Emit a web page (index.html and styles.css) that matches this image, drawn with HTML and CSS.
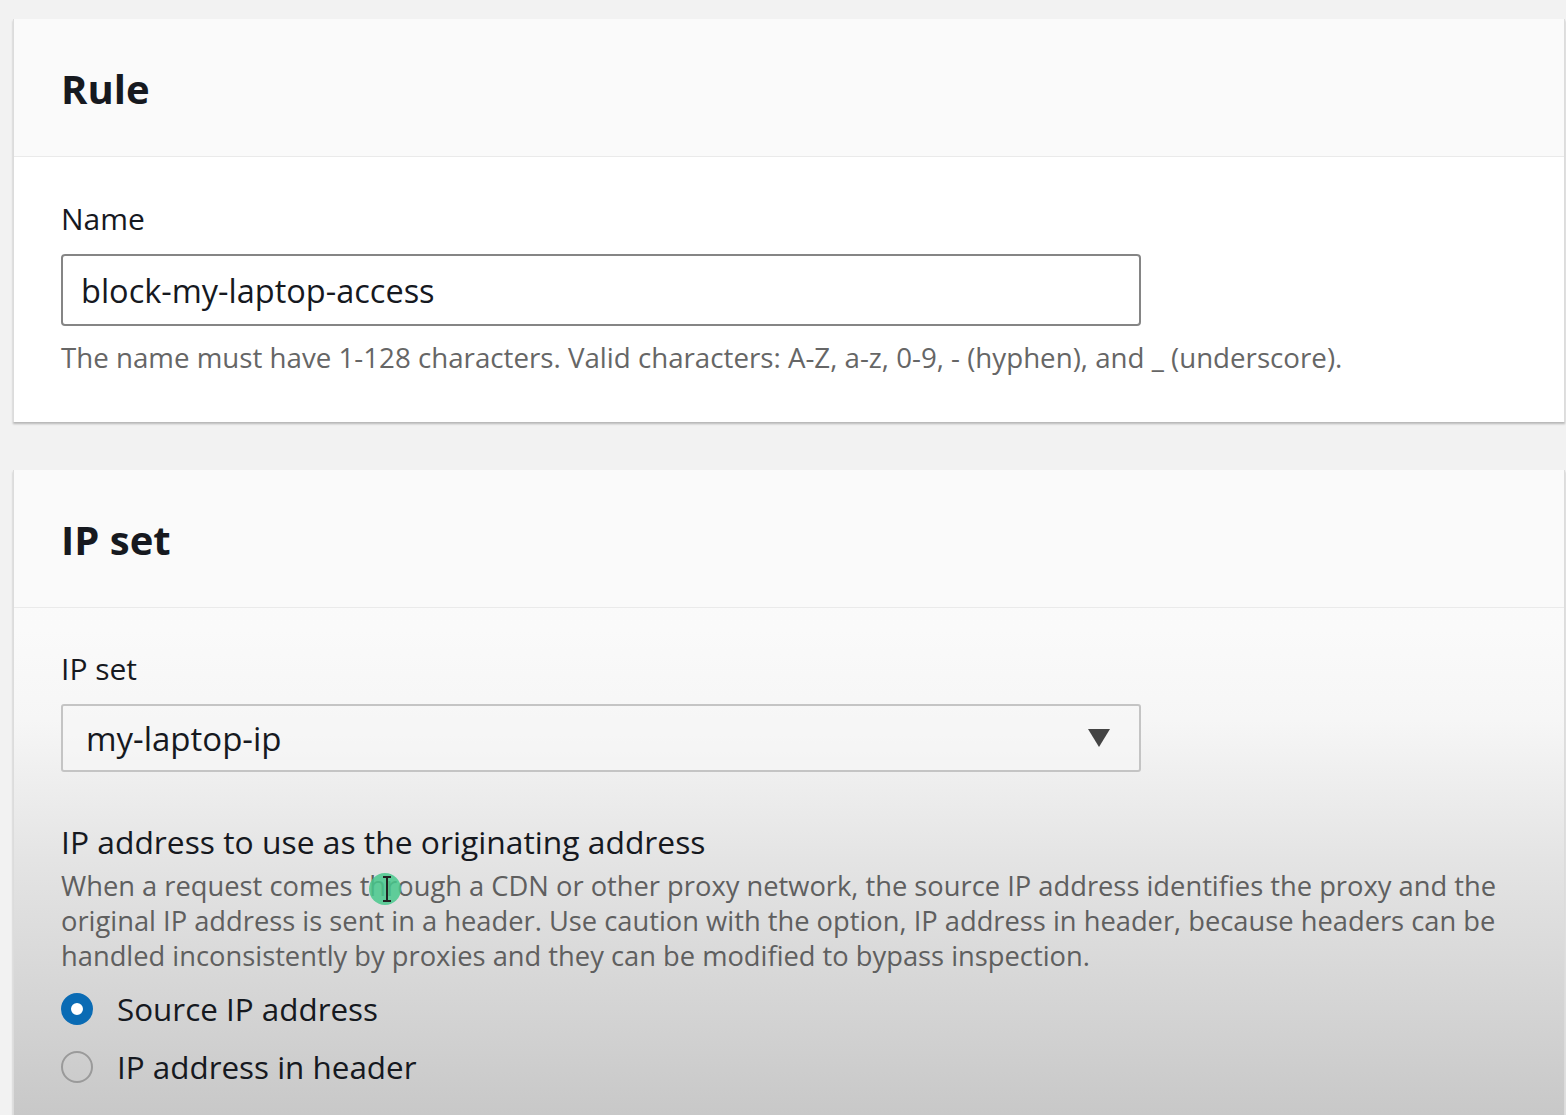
FILE: index.html
```html
<!DOCTYPE html>
<html lang="en">
<head>
<meta charset="utf-8">
<title>Rule</title>
<link rel="stylesheet" href="styles.css">
</head>
<body>
<div class="page">
  <section class="card">
    <header class="card-header"><h2>Rule</h2></header>
    <div class="card-body body-rule">
      <label class="field-label">Name</label>
      <div class="input">block-my-laptop-access</div>
      <p class="hint">The name must have 1-128 characters. Valid characters: A-Z, a-z, 0-9, - (hyphen), and _ (underscore).</p>
    </div>
  </section>

  <section class="card card-ipset">
    <header class="card-header"><h2>IP set</h2></header>
    <div class="card-body body-ipset">
      <label class="field-label label-ipset">IP set</label>
      <div class="select">
        <span>my-laptop-ip</span>
        <svg class="caret" width="24" height="20" viewBox="0 0 24 20"><path d="M1 1 L23 1 L12 19 Z" fill="#444"/></svg>
      </div>
      <div class="group-label">IP address to use as the originating address</div>
      <p class="desc">When a request comes through a CDN or other proxy network, the source IP address identifies the proxy and the original IP address is sent in a header. Use caution with the option, IP address in header, because headers can be handled inconsistently by proxies and they can be modified to bypass inspection.</p>
      <div class="radios">
        <div class="radio-row"><span class="radio checked"></span><span class="radio-text">Source IP address</span></div>
        <div class="radio-row"><span class="radio"></span><span class="radio-text">IP address in header</span></div>
      </div>
      <span class="cursor"><svg class="ibeam" width="12" height="26" viewBox="0 0 12 26"><path d="M2 1 H10 M6 1 V25 M2 25 H10" stroke="#222" stroke-width="2" fill="none"/></svg></span>
    </div>
  </section>
</div>
</body>
</html>
```

FILE: styles.css
```css
html, body {
  margin: 0;
  padding: 0;
  background: #f2f2f2;
  font-family: "Open Sans", "Noto Sans", sans-serif;
  color: #16191f;
}
.page {
  padding: 19px 1px 0 13px;
  height: 1096px;
  overflow: hidden;
  display: flex;
  flex-direction: column;
  gap: 48px;
}
.card {
  background: #ffffff;
  border-left: 1px solid #dcdcdc;
  border-right: 1px solid #dcdcdc;
  box-shadow: 0 2px 2px rgba(0,0,0,0.25);
}
.card-header {
  background: #fafafa;
  border-bottom: 1px solid #eaeaea;
  height: 137px;
  box-sizing: content-box;
  padding: 0 0 0 47px;
  display: flex;
  align-items: flex-start;
}
.card-header h2 {
  margin: 0;
  padding-top: 46px;
  font-size: 40px;
  line-height: 48px;
  font-weight: 700;
  color: #16191f;
}
.card-body {
  padding: 0 0 0 47px;
}
.body-rule {
  height: 265px;
  padding-top: 44px;
  box-sizing: border-box;
}
.field-label {
  display: block;
  font-size: 30px;
  line-height: 36px;
  color: #16191f;
}
.input {
  margin-top: 17px;
  width: 1080px;
  height: 72px;
  box-sizing: border-box;
  border: 2px solid #858585;
  border-radius: 4px;
  padding: 0 18px;
  display: flex;
  align-items: center;
  font-size: 32.5px;
  color: #16191f;
}
.hint {
  margin: 13px 0 0;
  font-size: 27.7px;
  line-height: 36px;
  color: #666666;
}
.card-ipset {
  flex: 1;
  background: linear-gradient(to bottom, #fbfbfb 0, #fafafa 160px, #f6f6f6 250px, #e4e4e4 390px, #d6d6d6 520px, #c8c8c8 645px);
}
.body-ipset {
  position: relative;
  padding-top: 43px;
}
.select {
  margin-top: 17px;
  width: 1080px;
  height: 68px;
  box-sizing: border-box;
  border: 2px solid #c4c4c4;
  border-radius: 3px;
  background: rgba(246,246,246,0.6);
  padding: 0 28px 0 23px;
  display: flex;
  align-items: center;
  justify-content: space-between;
  font-size: 33px;
  color: #16191f;
}
.group-label {
  margin-top: 51px;
  font-size: 31.8px;
  line-height: 38px;
  color: #16191f;
}
.desc {
  margin: 7px 0 0;
  font-size: 27.3px;
  line-height: 35px;
  color: #5f5f5f;
  max-width: 1470px;
}
.radios {
  margin-top: 16px;
  display: flex;
  flex-direction: column;
  gap: 18px;
}
.radio-row {
  display: flex;
  align-items: center;
  gap: 24px;
  height: 40px;
}
.radio {
  width: 32px;
  height: 32px;
  box-sizing: border-box;
  border-radius: 50%;
  border: 2px solid #9a9a9a;
  flex: none;
}
.radio.checked {
  border: 10px solid #0a6bb4;
  background: #ffffff;
}
.radio-text {
  font-size: 31.4px;
  line-height: 40px;
  color: #16191f;
}
.cursor {
  position: absolute;
  left: 355px;
  top: 265px;
  width: 32px;
  height: 32px;
  border-radius: 50%;
  background: rgba(72, 200, 140, 0.85);
}
.ibeam {
  position: absolute;
  left: 12px;
  top: 3px;
}
```
